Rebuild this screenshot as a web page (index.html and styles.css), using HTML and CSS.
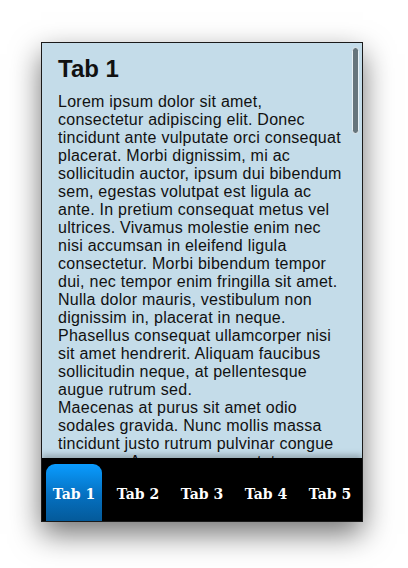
FILE: index.html
```html
<!DOCTYPE html>
<html>
<head>
<meta charset="utf-8">
<link rel="stylesheet" href="styles.css">
</head>
<body>
<div class="card">
  <div class="content">
    <h1 class="title">Tab 1</h1>
    <p class="text">Lorem ipsum dolor sit amet,<br>consectetur adipiscing elit. Donec<br>tincidunt ante vulputate orci consequat<br>placerat. Morbi dignissim, mi ac<br>sollicitudin auctor, ipsum dui bibendum<br>sem, egestas volutpat est ligula ac<br>ante. In pretium consequat metus vel<br>ultrices. Vivamus molestie enim nec<br>nisi accumsan in eleifend ligula<br>consectetur. Morbi bibendum tempor<br>dui, nec tempor enim fringilla sit amet.<br>Nulla dolor mauris, vestibulum non<br>dignissim in, placerat in neque.<br>Phasellus consequat ullamcorper nisi<br>sit amet hendrerit. Aliquam faucibus<br>sollicitudin neque, at pellentesque<br>augue rutrum sed.<br>Maecenas at purus sit amet odio<br>sodales gravida. Nunc mollis massa<br>tincidunt justo rutrum pulvinar congue<br>non sem. Aenean a consectetur sem,</p>
  </div>
  <div class="scrollbar"></div>
  <nav class="tabbar">
    <div class="tab active">Tab 1</div>
    <div class="tab">Tab 2</div>
    <div class="tab">Tab 3</div>
    <div class="tab">Tab 4</div>
    <div class="tab">Tab 5</div>
  </nav>
</div>
</body>
</html>
```
FILE: styles.css
```css
html, body {
  margin: 0;
  padding: 0;
  background: #ffffff;
}
body {
  width: 408px;
  height: 568px;
  overflow: hidden;
}
.card {
  position: relative;
  margin: 42px 0 0 41px;
  width: 320px;
  height: 478px;
  border: 1px solid #1a1a1a;
  background: #c4dce9;
  display: flex;
  flex-direction: column;
  overflow: hidden;
  box-shadow: 0 12px 28px rgba(0, 0, 0, 0.55);
}
.content {
  flex: 1;
  overflow: hidden;
  padding: 12px 4px 0 16px;
  font-family: "Liberation Sans", Arial, sans-serif;
  color: #111;
}
.title {
  margin: 0;
  font-size: 24px;
  line-height: 28px;
  font-weight: bold;
}
.text {
  margin: 10px 0 0 0;
  font-size: 16px;
  letter-spacing: 0.25px;
  line-height: 18px;
  white-space: nowrap;
}
.scrollbar {
  position: absolute;
  top: 4px;
  right: 3px;
  width: 5px;
  height: 85px;
  border: 1px solid #e8f0f4;
  border-radius: 4px;
  background: #66757c;
}
.tabbar {
  height: 63px;
  flex: none;
  background: #000;
  display: flex;
  padding: 6px 0 0 0;
  box-sizing: border-box;
  box-shadow: 0 -3px 6px rgba(0, 0, 0, 0.25);
  position: relative;
}
.tab {
  flex: 1;
  margin: 0 4px;
  display: flex;
  align-items: center;
  justify-content: center;
  font-family: "DejaVu Serif", Georgia, serif;
  font-weight: bold;
  font-size: 14px;
  color: #fff;
  border-radius: 9px 9px 0 0;
  padding-top: 2px;
  white-space: nowrap;
}
.tab.active {
  background: linear-gradient(to bottom, #0a9cff 0%, #0570c0 55%, #045a9a 100%);
}
```
